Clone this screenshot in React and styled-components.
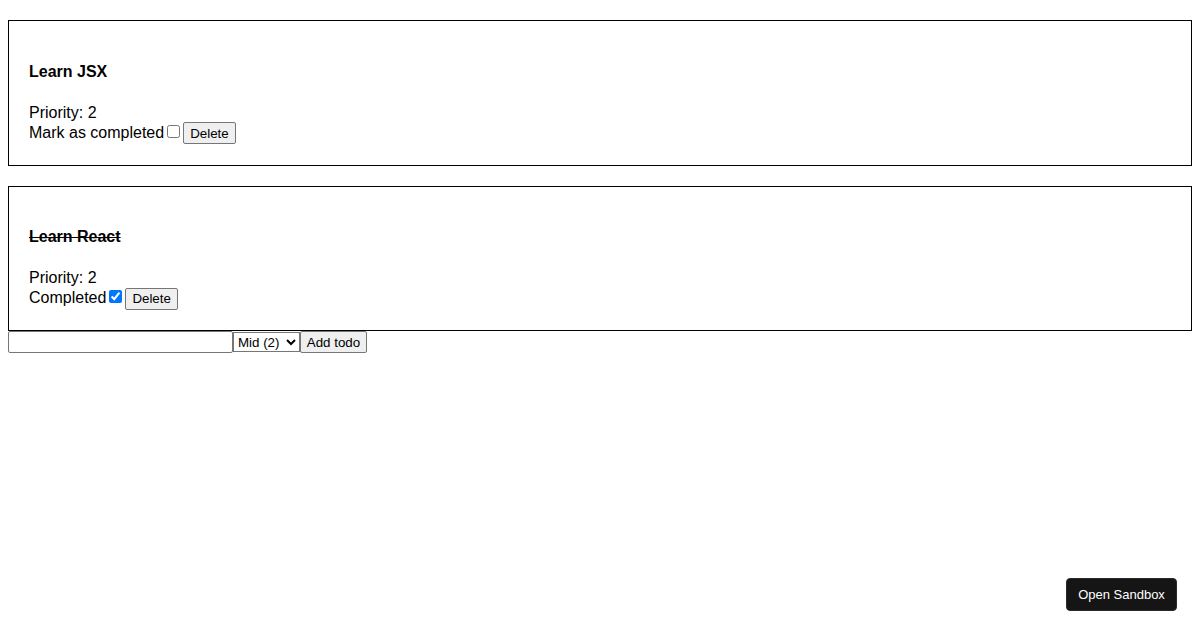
import React from 'react';
import styled, { createGlobalStyle } from 'styled-components';

const GlobalStyle = createGlobalStyle`
  body {
    margin: 8px;
    font-family: "Liberation Sans", Arial, sans-serif;
    font-size: 16px;
    color: #000;
    background: #fff;
  }
`;

const List = styled.div`
  display: flex;
  flex-direction: column;
  gap: 20px;
  padding-top: 12px;
`;

const Card = styled.div`
  border: 1px solid #000;
  padding: 20px 20px 20.5px;
`;

const Title = styled.h4`
  font-size: 16px;
  font-weight: bold;
  margin: 21.5px 0 23px;
  text-decoration: ${(p) => (p.done ? 'line-through' : 'none')};
`;

const Line = styled.div`
  line-height: normal;
`;

const Check = styled.input`
  margin: 3px 3px 3px 3px;
  width: 13px;
  height: 13px;
  vertical-align: baseline;
`;

const SmallButton = styled.button`
  font-family: "Liberation Sans", Arial, sans-serif;
  font-size: 13.33px;
  padding: 1px 6px;
  border: 1px solid #767676;
  border-radius: 2px;
  background: #efefef;
  color: #000;
  height: 22px;
`;

const Form = styled.form`
  display: flex;
  align-items: flex-start;
  margin: 0;
`;

const TextInput = styled.input`
  font-family: "Liberation Sans", Arial, sans-serif;
  font-size: 13.33px;
  width: 225px;
  height: 22px;
  box-sizing: border-box;
  padding: 1px 2px;
  border: 1px solid #767676;
  border-radius: 2px;
  margin: 0;
`;

const Select = styled.select`
  font-family: "Liberation Sans", Arial, sans-serif;
  font-size: 13.33px;
  height: 20px;
  width: 67px;
  margin: 1px 0 0;
  border: 1px solid #767676;
  border-radius: 0;
  background: #fff;
`;

const AddButton = styled(SmallButton)`
  height: 22px;
  width: 67px;
  padding: 1px 4px;
`;

const SandboxButton = styled.button`
  position: fixed;
  right: 23px;
  bottom: 19px;
  width: 111px;
  height: 33px;
  background: #151515;
  color: #fff;
  border: 1px solid #2a2a2a;
  border-radius: 4px;
  font-family: "Liberation Sans", Arial, sans-serif;
  font-size: 13px;
  cursor: pointer;
`;

const todos = [
  { id: 1, title: 'Learn JSX', priority: 2, done: false },
  { id: 2, title: 'Learn React', priority: 2, done: true },
];

export default function App() {
  return (
    <>
      <GlobalStyle />
      <List>
        {todos.map((t) => (
          <Card key={t.id}>
            <Title done={t.done}>{t.title}</Title>
            <Line>Priority: {t.priority}</Line>
            <Line>
              {t.done ? 'Completed' : 'Mark as completed'}
              <Check type="checkbox" defaultChecked={t.done} />
              <SmallButton>Delete</SmallButton>
            </Line>
          </Card>
        ))}
      </List>
      <Form onSubmit={(e) => e.preventDefault()}>
        <TextInput type="text" />
        <Select defaultValue="2">
          <option value="1">Low (1)</option>
          <option value="2">Mid (2)</option>
          <option value="3">High (3)</option>
        </Select>
        <AddButton type="submit">Add todo</AddButton>
      </Form>
      <SandboxButton>Open Sandbox</SandboxButton>
    </>
  );
}
